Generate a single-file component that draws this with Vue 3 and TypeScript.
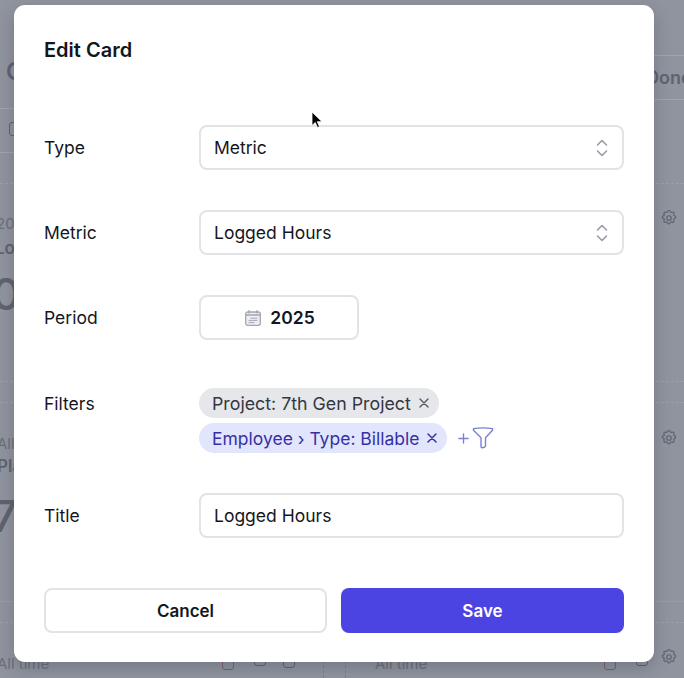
<script setup lang="ts">
const bgTexts = [
  { t: 'C', cls: 'big', x: 6, y: 58 },
  { t: 'Done', cls: 'head', x: 646, y: 67 },
  { t: '2025', cls: 'small', x: -4, y: 215 },
  { t: 'Logged', cls: 'bold', x: -5, y: 238 },
  { t: '0', cls: 'huge', x: -8, y: 268 },
  { t: 'All time', cls: 'small', x: -3, y: 435 },
  { t: 'Planned', cls: 'bold', x: -3, y: 456 },
  { t: '7', cls: 'huge', x: -8, y: 490 },
  { t: 'All time', cls: 'small', x: -3, y: 655 },
  { t: 'All time', cls: 'small', x: 375, y: 655 },
]
const gears = [218, 438, 657]
const gearPath =
  'M10.3 3.2c.4-1.6 2.9-1.6 3.4 0a1.7 1.7 0 0 0 2.6 1.1c1.5-.9 3.2.8 2.3 2.3a1.7 1.7 0 0 0 1.1 2.6c1.6.4 1.6 2.9 0 3.4a1.7 1.7 0 0 0-1.1 2.6c.9 1.5-.8 3.2-2.3 2.3a1.7 1.7 0 0 0-2.6 1.1c-.4 1.6-2.9 1.6-3.4 0a1.7 1.7 0 0 0-2.6-1.1c-1.5.9-3.2-.8-2.3-2.3a1.7 1.7 0 0 0-1.1-2.6c-1.6-.4-1.6-2.9 0-3.4a1.7 1.7 0 0 0 1.1-2.6c-.9-1.5.8-3.2 2.3-2.3 1 .6 2.3.1 2.6-1.1Z'
</script>

<template>
  <div class="page">
    <div class="backdrop" aria-hidden="true">
      <span class="hline" style="top: 108px; left: 0; width: 14px"></span>
      <span class="hline" style="top: 152px; left: 0; width: 14px"></span>
      <span class="hline" style="top: 55px; left: 654px; width: 30px"></span>
      <span class="hline" style="top: 99px; left: 654px; width: 30px"></span>
      <span class="dotline" style="top: 183px"></span>
      <span class="dotline" style="top: 381px"></span>
      <span class="dotline" style="top: 402px"></span>
      <span class="hline faint" style="top: 601px; left: 0; width: 684px"></span>
      <span class="dotline" style="top: 622px"></span>
      <span class="vline" style="left: 323px"></span>
      <span class="vline" style="left: 345px"></span>
      <span v-for="b in bgTexts" :key="b.t + b.x + b.y" class="bgtext" :class="b.cls" :style="{ left: b.x + 'px', top: b.y + 'px' }">{{ b.t }}</span>
      <svg v-for="y in gears" :key="y" class="gear" :style="{ top: y - 9 + 'px' }" viewBox="0 0 24 24" fill="none" stroke="#5f6470" stroke-width="1.6">
        <path :d="gearPath" />
        <circle cx="12" cy="12" r="3" />
      </svg>
      <span class="stub" style="left: 9px; top: 122px"></span>
      <span class="stub red" style="left: 222px; top: 656px"></span>
      <span class="stub" style="left: 254px; top: 652px"></span>
      <span class="stub" style="left: 283px; top: 654px"></span>
      <span class="stub red" style="left: 604px; top: 656px"></span>
      <span class="stub" style="left: 636px; top: 652px"></span>
    </div>

    <section class="modal">
      <h2 class="title">Edit Card</h2>

      <div class="form">
        <div class="row">
          <label>Type</label>
          <div class="field select">
            <span>Metric</span>
            <svg class="updown" viewBox="0 0 12 18" fill="none" stroke="#989ca7" stroke-width="1.6" stroke-linecap="round" stroke-linejoin="round">
              <path d="M1.5 6 6 1.5 10.5 6" />
              <path d="M1.5 12 6 16.5 10.5 12" />
            </svg>
          </div>
        </div>

        <div class="row">
          <label>Metric</label>
          <div class="field select">
            <span>Logged Hours</span>
            <svg class="updown" viewBox="0 0 12 18" fill="none" stroke="#989ca7" stroke-width="1.6" stroke-linecap="round" stroke-linejoin="round">
              <path d="M1.5 6 6 1.5 10.5 6" />
              <path d="M1.5 12 6 16.5 10.5 12" />
            </svg>
          </div>
        </div>

        <div class="row">
          <label>Period</label>
          <div class="field period">
            <svg class="cal" viewBox="0 0 16 16" fill="none" stroke="#a3a7b1" stroke-width="1.3" stroke-linecap="round">
              <rect x="0.7" y="2" width="14.6" height="13.3" rx="2" fill="#eceef1" />
              <path d="M4 .6v2.4M12 .6v2.4" />
              <path d="M1 5h14" />
              <path d="M6 8.2h6M4 10.4h8M4 12.6h5" stroke-width="1" />
            </svg>
            <strong>2025</strong>
          </div>
        </div>

        <div class="row filters">
          <label>Filters</label>
          <div class="chips">
            <div class="chipline">
              <span class="chip gray">Project: 7th Gen Project
                <svg class="x" viewBox="0 0 10 10" fill="none" stroke="currentColor" stroke-width="1.5" stroke-linecap="round"><path d="M1 1l8 8M9 1 1 9" /></svg>
              </span>
            </div>
            <div class="chipline">
              <span class="chip blue">Employee › Type: Billable
                <svg class="x" viewBox="0 0 10 10" fill="none" stroke="currentColor" stroke-width="1.5" stroke-linecap="round"><path d="M1 1l8 8M9 1 1 9" /></svg>
              </span>
              <svg class="plus" viewBox="0 0 12 12" fill="none" stroke="#7a7fdc" stroke-width="1.5" stroke-linecap="round"><path d="M6 1v10M1 6h10" /></svg>
              <svg class="funnel" viewBox="0 0 22 22" fill="none" stroke="#7a7fdc" stroke-width="1.4" stroke-linejoin="round">
                <path d="M1.5 1.6c6-.9 13-.9 19 0v1.7l-7 7.5v7.8c0 1-.4 1.5-1.2 1.7l-2.4.4c-.6-.1-.9-.5-.9-1.1v-8.8l-7.5-7.5Z" />
              </svg>
            </div>
          </div>
        </div>

        <div class="row">
          <label>Title</label>
          <div class="field text">Logged Hours</div>
        </div>
      </div>

      <footer class="actions">
        <button class="btn cancel" type="button">Cancel</button>
        <button class="btn save" type="button">Save</button>
      </footer>
    </section>

    <svg class="cursor" viewBox="0 0 12 18" aria-hidden="true">
      <path d="M1 1v13.5l3.3-3 2.2 5 2-.9-2.2-4.9H11Z" fill="#000" stroke="#fff" stroke-width="0.8" />
    </svg>
  </div>
</template>

<style>
html, body { margin: 0; background: #8f94a0; }
</style>

<style scoped>
.page {
  position: relative;
  width: 684px;
  height: 678px;
  overflow: hidden;
  padding: 5px 30px 0 14px;
  box-sizing: border-box;
  background: #8f949f;
  font-family: Inter, "Liberation Sans", sans-serif;
  color: #14161d;
}
.backdrop { position: absolute; inset: 0; }
.bgtext { position: absolute; color: #5f636f; font-weight: 400; white-space: nowrap; line-height: 1.2; }
.big { font-size: 24px; font-weight: 600; }
.head { font-size: 18px; font-weight: 600; }
.small { font-size: 15px; color: #6b6f7b; }
.bold { font-size: 17px; font-weight: 600; }
.huge { font-size: 44px; font-weight: 500; }
.hline { position: absolute; height: 1px; background: #a0a4ae; }
.hline.faint { background: #989ca7; }
.dotline { position: absolute; left: 0; width: 684px; border-top: 1px dashed #9ca0aa; }
.vline { position: absolute; top: 622px; height: 56px; border-left: 1px dashed #7d818d; }
.gear { position: absolute; left: 660px; width: 18px; height: 18px; }
.stub { position: absolute; width: 12px; height: 14px; box-sizing: border-box; border: 1.3px solid #5f636f; border-radius: 3px; }
.stub.red { border-color: #7d5f6b; }
.modal {
  position: relative;
  width: 640px;
  height: 657px;
  box-sizing: border-box;
  padding: 30px;
  background: #fff;
  border-radius: 11px;
  box-shadow: 0 6px 16px rgba(40, 44, 56, 0.25);
}
.title { margin: 0; font-size: 20px; line-height: 30px; font-weight: 600; }
.form { display: flex; flex-direction: column; gap: 40px; margin-top: 60px; }
.row { display: flex; align-items: center; font-size: 17.5px; }
.row.filters { align-items: flex-start; padding-top: 8px; }
.row.filters label { line-height: 32px; }
label { width: 155px; flex: none; font-weight: 400; }
.field {
  height: 45px;
  box-sizing: border-box;
  border: 2px solid #e2e3e7;
  border-radius: 8px;
  display: flex;
  align-items: center;
  background: #fff;
}
.select, .text { width: 425px; padding: 0 13px; }
.select { justify-content: space-between; }
.updown { width: 12px; height: 18px; margin-right: 1px; }
.period { width: 160px; justify-content: center; gap: 9px; padding-left: 2px; }
.period strong { font-weight: 600; font-size: 17.5px; }
.cal { width: 16px; height: 16px; }
.chips { display: flex; flex-direction: column; gap: 5px; }
.chipline { display: flex; align-items: center; }
.chip {
  display: inline-flex;
  align-items: center;
  gap: 7px;
  height: 30px;
  padding: 0 10px 0 13px;
  border-radius: 15px;
}
.gray { background: #e6e7eb; color: #343741; font-size: 17.8px; gap: 8px; }
.gray .x { color: #5d606b; }
.blue { background: #e1e6fd; color: #3730a3; font-size: 17.5px; }
.x { width: 10px; height: 10px; }
.plus { width: 11px; height: 11px; margin-left: 11px; }
.funnel { width: 22px; height: 22px; margin-left: 3px; }
.actions { display: flex; justify-content: space-between; margin-top: 50px; }
.btn {
  flex: 0 0 283px;
  box-sizing: border-box;
  height: 45px;
  padding: 0;
  border-radius: 8px;
  font-family: inherit;
  font-size: 17px;
  font-weight: 600;
  cursor: pointer;
}
.cancel { background: #fff; color: #14161d; border: 2px solid #e2e3e7; }
.save { background: #4c44e2; color: #fff; border: 0; }
.cursor { position: absolute; left: 311px; top: 111px; width: 12px; height: 18px; }
</style>
